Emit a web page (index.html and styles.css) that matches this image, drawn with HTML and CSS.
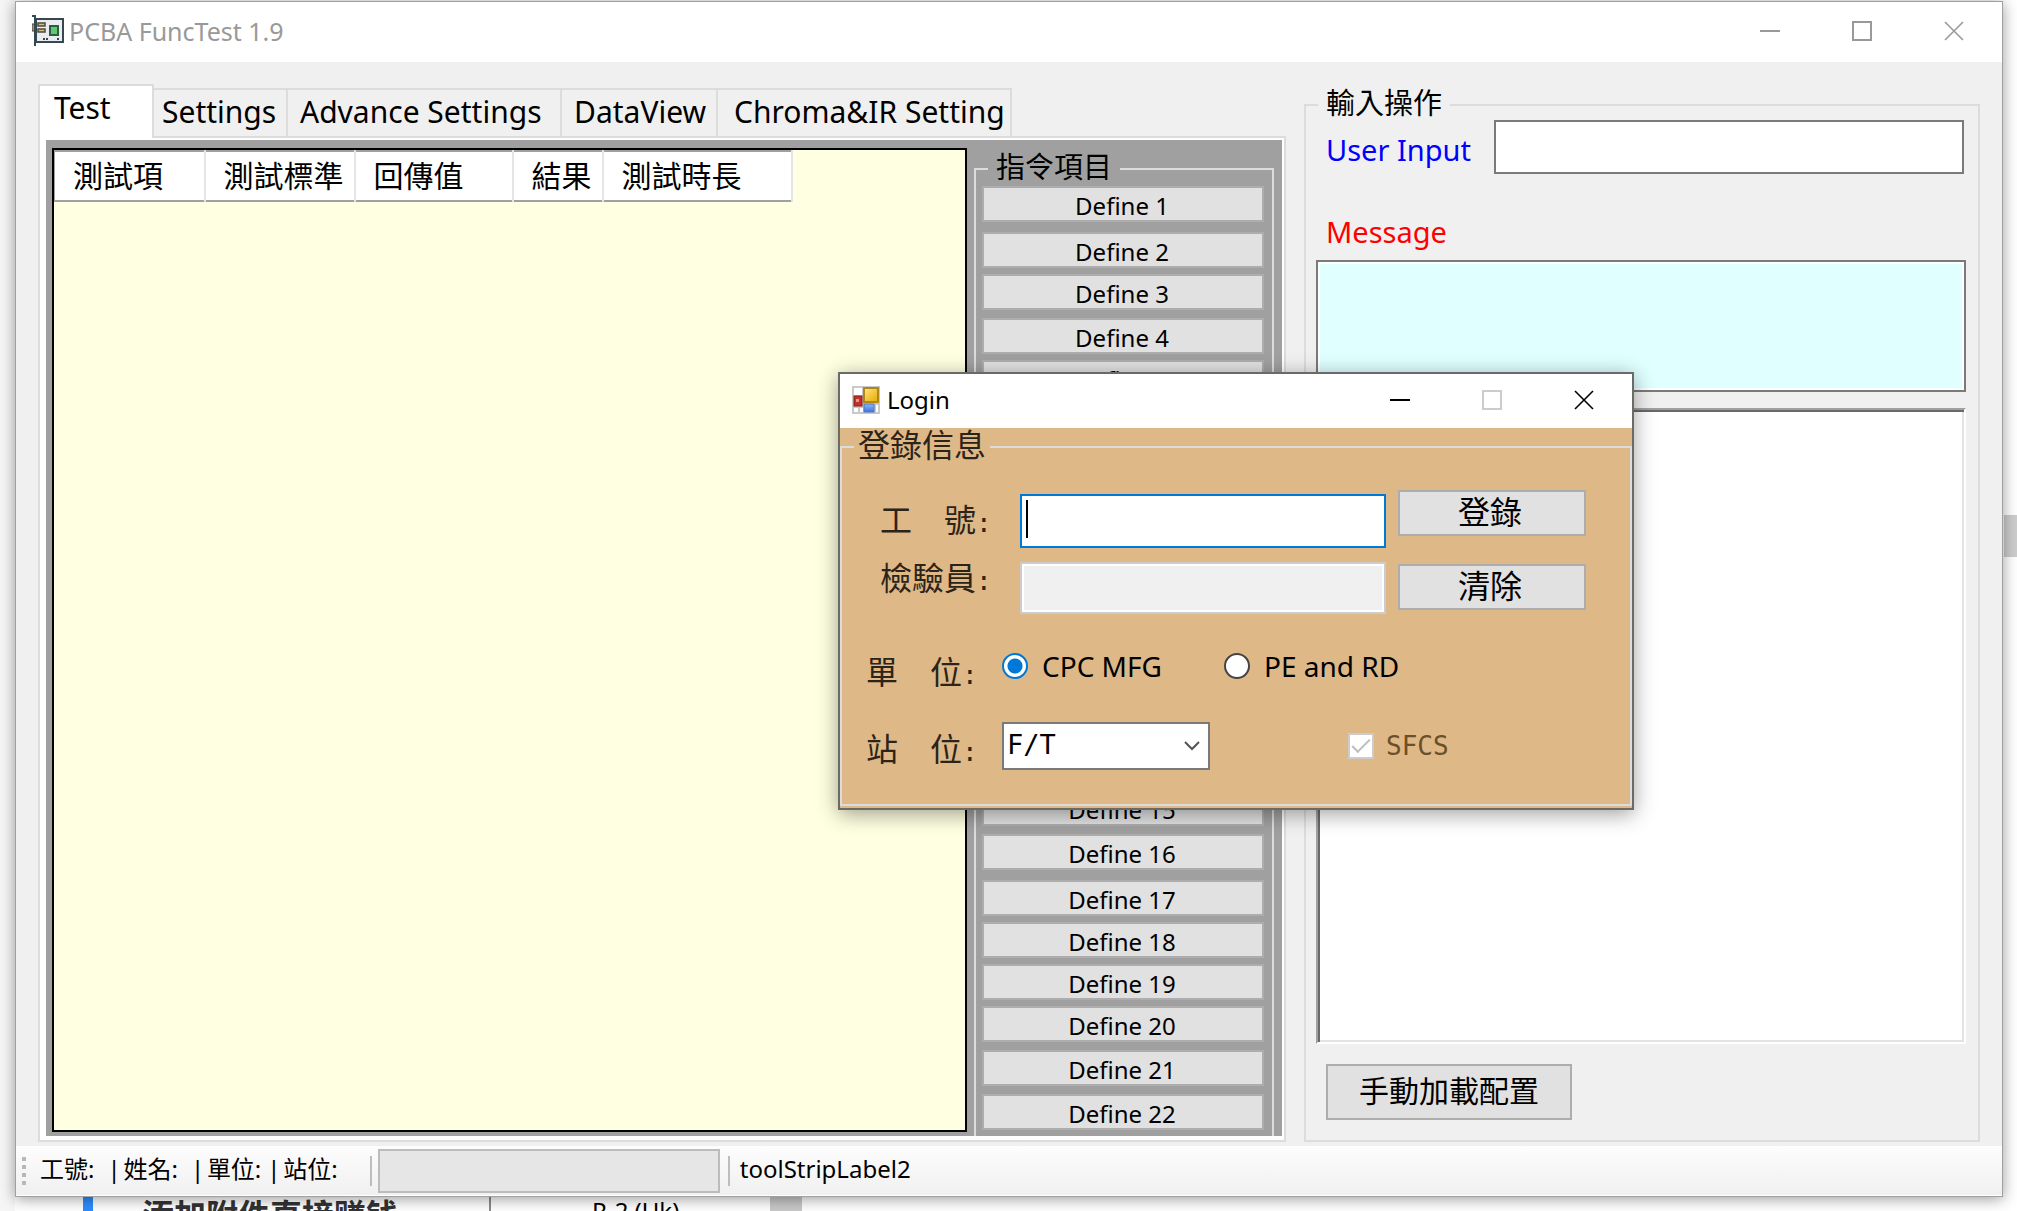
FILE: index.html
```html
<!DOCTYPE html>
<html lang="zh-Hant">
<head>
<meta charset="utf-8">
<title>PCBA FuncTest 1.9</title>
<link rel="stylesheet" href="styles.css">
</head>
<body>
<div class="window">
  <header class="titlebar">
    <svg class="app-icon" viewBox="0 0 32 32" aria-hidden="true">
      <rect x="0" y="9" width="3" height="7" fill="#c98a5c" stroke="#37474f"/>
      <rect x="4" y="4" width="27" height="23" fill="#e9edf0" stroke="#37474f" stroke-width="2"/>
      <path d="M0 1h3v30" fill="none" stroke="#2f4a50" stroke-width="2"/>
      <rect x="6" y="8" width="7" height="3" fill="#d3bd7c" stroke="#4d4a3c" stroke-width="1.5"/>
      <rect x="6" y="14" width="7" height="3" fill="#d3bd7c" stroke="#4d4a3c" stroke-width="1.5"/>
      <rect x="18" y="11" width="8" height="9" fill="#5ccb68" stroke="#2f5a48" stroke-width="2"/>
      <path d="M11 24h2M14 24h2M25 24h2" stroke="#37474f" stroke-width="2"/>
    </svg>
    <h1 class="caption">PCBA FuncTest 1.9</h1>
    <div class="controls">
      <button type="button" aria-label="Minimize"><svg viewBox="0 0 20 20"><path d="M0 10h20"/></svg></button>
      <button type="button" aria-label="Maximize"><svg viewBox="0 0 20 20"><path d="M1 1h18v18H1z"/></svg></button>
      <button type="button" aria-label="Close"><svg viewBox="0 0 20 20"><path class="thin" d="M1 1l18 18M19 1L1 19"/></svg></button>
    </div>
  </header>

  <main class="workspace">
    <section class="tabs">
      <div class="tab-list" role="tablist">
        <button type="button" role="tab" class="tab selected" aria-selected="true">Test</button>
        <button type="button" role="tab" class="tab settings">Settings</button>
        <button type="button" role="tab" class="tab advance">Advance Settings</button>
        <button type="button" role="tab" class="tab dataview">DataView</button>
        <button type="button" role="tab" class="tab chroma">Chroma&amp;IR Setting</button>
      </div>
      <div class="tab-panel">
        <div class="test-page">
          <div class="results">
            <table>
              <colgroup><col class="w-item"><col class="w-standard"><col class="w-value"><col class="w-result"><col class="w-time"></colgroup>
              <thead><tr><th>測試項</th><th>測試標準</th><th>回傳值</th><th>結果</th><th>測試時長</th></tr></thead>
            </table>
          </div>
          <fieldset class="commands">
            <legend>指令項目</legend>
            <button type="button" class="far">Define 1</button>
            <button type="button">Define 2</button>
            <button type="button" class="mid">Define 3</button>
            <button type="button">Define 4</button>
            <button type="button" class="mid">Define 5</button>
            <button type="button">Define 6</button>
            <button type="button" class="mid">Define 7</button>
            <button type="button">Define 8</button>
            <button type="button" class="mid">Define 9</button>
            <button type="button">Define 10</button>
            <button type="button" class="mid">Define 11</button>
            <button type="button">Define 12</button>
            <button type="button" class="mid">Define 13</button>
            <button type="button">Define 14</button>
            <button type="button" class="mid">Define 15</button>
            <button type="button" class="far">Define 16</button>
            <button type="button">Define 17</button>
            <button type="button">Define 18</button>
            <button type="button">Define 19</button>
            <button type="button" class="mid">Define 20</button>
            <button type="button" class="mid">Define 21</button>
            <button type="button">Define 22</button>
          </fieldset>
        </div>
      </div>
    </section>

    <fieldset class="operation">
      <legend>輸入操作</legend>
      <div class="input-row">
        <label for="user-input">User Input</label>
        <input id="user-input" type="text">
      </div>
      <label class="message-label" for="message">Message</label>
      <textarea id="message" class="message" readonly></textarea>
      <textarea class="log" aria-label="Log" readonly></textarea>
      <button type="button" class="load">手動加載配置</button>
    </fieldset>
  </main>

  <footer class="statusbar">
    <span class="grip"></span>
    <span class="cell">工號:</span><span class="bar">|</span>
    <span class="cell">姓名:</span><span class="bar">|</span>
    <span class="cell">單位:</span><span class="bar tight">|</span>
    <span class="cell">站位:</span>
    <span class="separator first"></span>
    <span class="progress"></span>
    <span class="separator"></span>
    <span class="cell">toolStripLabel2</span>
  </footer>
</div>

<div class="backdrop">
  <span class="marker"></span>
  <strong class="headline">添加附件直接赚钱</strong>
  <span class="drive">R-2 (Uk)</span>
  <span class="block"></span>
</div>
<div class="page-thumb"></div>

<form class="dialog">
  <header class="titlebar dialog-title">
    <svg class="form-icon" viewBox="0 0 28 28" aria-hidden="true">
      <defs>
        <linearGradient id="gold" x2="1" y2="1"><stop stop-color="#ffe680"/><stop offset="1" stop-color="#eaa800"/></linearGradient>
        <linearGradient id="blue" x2="0" y2="1"><stop stop-color="#8db8f5"/><stop offset="1" stop-color="#3f74d8"/></linearGradient>
      </defs>
      <rect width="28" height="28" fill="#c9c9c9"/>
      <path d="M2 2h8v7H2zM2 22h4v4H2zM8 22h3v4H8zM24 19h2v7h-2z" fill="#fff"/>
      <rect x="2" y="10" width="8" height="10" fill="#c03028" stroke="#8e1d18"/>
      <rect x="4" y="13" width="3" height="3" fill="#f09088"/>
      <rect x="12" y="2" width="14" height="14" fill="url(#gold)" stroke="#b08818" stroke-width="2"/>
      <rect x="12" y="18" width="10" height="8" fill="url(#blue)" stroke="#4a78c8"/>
    </svg>
    <h2 class="caption">Login</h2>
    <div class="controls">
      <button type="button" aria-label="Minimize"><svg viewBox="0 0 20 20"><path d="M0 10h20"/></svg></button>
      <button type="button" aria-label="Maximize" disabled><svg viewBox="0 0 20 20"><path d="M1 1h18v18H1z"/></svg></button>
      <button type="button" aria-label="Close"><svg viewBox="0 0 20 20"><path class="thin" d="M1 1l18 18M19 1L1 19"/></svg></button>
    </div>
  </header>
  <div class="dialog-body">
    <fieldset>
      <legend>登錄信息</legend>
      <div class="credentials">
        <div class="fields">
          <label for="job-no">工　號<span class="colon">:</span></label>
          <input id="job-no" class="active" type="text">
          <label for="inspector">檢驗員<span class="colon">:</span></label>
          <input id="inspector" type="text" disabled>
        </div>
        <div class="actions">
          <button type="submit">登錄</button>
          <button type="reset">清除</button>
        </div>
      </div>
      <div class="unit" role="radiogroup" aria-labelledby="unit-label">
        <span id="unit-label" class="kai">單　位<span class="colon">:</span></span>
        <input type="radio" name="unit" id="mfg" checked><label for="mfg">CPC MFG</label>
        <input type="radio" name="unit" id="rd"><label for="rd">PE and RD</label>
      </div>
      <div class="station">
        <label class="kai" for="station">站　位<span class="colon">:</span></label>
        <span class="select-box">
          <select id="station"><option>F/T</option></select>
          <svg viewBox="0 0 16 10" aria-hidden="true"><path d="M1 1l7 7 7-7"/></svg>
        </span>
        <input type="checkbox" id="sfcs" checked disabled><label class="sfcs" for="sfcs">SFCS</label>
      </div>
    </fieldset>
  </div>
</form>
</body>
</html>
```

FILE: styles.css
```css
*, *::before, *::after { box-sizing: border-box; }

body {
  margin: 0;
  height: 100vh;
  overflow: hidden;
  display: flex;
  flex-direction: column;
  position: relative;
  background: linear-gradient(90deg, #f6f6f6 15px, #fff 15px);
  color: #000;
  font-family: "Noto Sans", "Noto Sans CJK TC", sans-serif;
  font-size: 28px;
}

button, input, select, textarea { font: inherit; color: inherit; margin: 0; border-radius: 0; outline: 0; }
button { padding: 0; background: #e1e1e1; border: 2px solid #adadad; }
fieldset { margin: 0; padding: 0; min-width: 0; border: 2px solid #dcdcdc; }
textarea { display: block; width: 100%; resize: none; }

/* Window frame */
.window {
  flex: 1;
  min-height: 0;
  margin: 1px 14px 0 15px;
  border: 1px solid #a0a0a0;
  display: flex;
  flex-direction: column;
  position: relative;
  z-index: 1;
  background: #f0f0f0;
  box-shadow: 0 2px 14px rgba(0, 0, 0, .4);
}
.titlebar { display: flex; align-items: center; background: #fff; height: 60px; padding: 0 2px 3px 16px; }
.caption { margin: 0; font-size: 25px; font-weight: 400; line-height: 32px; }
.app-icon { width: 32px; height: 32px; margin-right: 5px; }
.window > .titlebar { color: #999; }
.controls { display: flex; margin-left: auto; }
.controls button { width: 92px; height: 54px; border: 0; background: none; display: grid; place-items: center; }
.controls svg { width: 20px; height: 20px; fill: none; stroke: currentColor; stroke-width: 2; }
.controls .thin { stroke-width: 1.6; }
.controls button:disabled { color: #ccc; }

.workspace {
  flex: 1;
  min-height: 0;
  display: grid;
  grid-template-columns: 1248fr 676fr;
  gap: 18px;
  padding: 22px 22px 4px;
}

/* Tabs */
.tabs { display: flex; flex-direction: column; min-height: 0; }
.tab-list { display: flex; align-items: flex-end; height: 52px; }
.tab {
  height: 48px;
  padding: 0 0 2px 8px;
  text-align: left;
  font-size: 30px;
  line-height: 40px;
  white-space: nowrap;
  background: #f0f0f0;
  border: solid #dcdcdc;
  border-width: 2px 2px 0 0;
}
.tab.selected { width: 116px; height: 54px; margin-bottom: -2px; padding: 0 0 8px 14px; background: #fff; border-width: 2px 2px 0; position: relative; }
.tab.settings { width: 134px; }
.tab.advance { width: 274px; padding-left: 12px; }
.tab.dataview { width: 156px; padding-left: 12px; }
.tab.chroma { width: 294px; padding-left: 16px; }
.tab-panel { flex: 1; min-height: 0; display: flex; background: #fff; border: 2px solid #dcdcdc; padding: 2px 2px 4px 6px; }
.test-page { flex: 1; display: grid; grid-template-columns: 1fr 300px; gap: 7px; padding: 8px 8px 0 6px; background: #a0a0a0; }

.results { border: 2px solid #000; background: #ffffe1; margin-bottom: 4px; }
.results table { border-collapse: collapse; table-layout: fixed; width: 737px; background: #fff; border: solid #a0a0a0; border-width: 2px 0 2px 1px; }
.results th { height: 50px; padding: 0 0 0 18px; text-align: left; font-size: 30px; line-height: 36px; font-weight: 400; border-right: 2px solid #e5e5e5; }
.w-item { width: 150px; }
.w-standard { width: 150px; }
.w-value { width: 158px; }
.w-result { width: 90px; }
.w-time { width: 189px; }

legend { padding: 0 8px 4px; font-size: 29px; line-height: 26px; }
.commands { margin-top: 6px; padding: 2px 8px 6px 6px; border-bottom: 0; }
.commands legend { margin-left: 6px; }
.commands button { display: block; width: 100%; height: 36px; margin-bottom: 6px; padding: 4px 2px 0 0; font-size: 24px; line-height: 28px; }
.commands button.mid { margin-bottom: 8px; }
.commands button.far { margin-bottom: 10px; }
.commands button:last-child { margin-bottom: 0; }

/* Operation panel */
.operation { margin-top: 6px; min-height: 0; padding: 0 12px 20px 10px; display: flex; flex-direction: column; }
.operation legend { margin-left: 2px; }
.input-row { display: flex; align-items: center; padding-left: 10px; }
.input-row label { width: 168px; padding-top: 6px; color: #00f; font-size: 29px; line-height: 36px; }
.input-row input { flex: 1; min-width: 0; height: 54px; margin-right: 2px; background: #fff; border: 2px solid #7a7a7a; }
.message-label { margin: 40px 0 10px 10px; font-size: 29px; line-height: 36px; color: #f00; }
.message { height: 132px; background: #e0ffff; border: 2px solid #7a7a7a; box-shadow: inset 0 0 0 2px #fff; }
.log { flex: 1; min-height: 0; margin: 16px 0 20px; background: #fff; border: 2px solid; border-color: #a0a0a0 #fff #fff #a0a0a0; box-shadow: inset 2px 2px #696969, inset -2px -2px #e3e3e3; }
.load { align-self: flex-start; width: 246px; height: 56px; margin-left: 10px; padding-bottom: 2px; font-size: 30px; line-height: 40px; }

/* Status bar */
.statusbar { display: flex; align-items: center; height: 50px; padding: 0 6px; font-size: 24px; line-height: 32px; background: linear-gradient(#fdfdfd, #f0f0f0); border-bottom: 1px solid #fff; white-space: nowrap; }
.cell, .bar { padding-bottom: 4px; }
.grip { width: 4px; height: 28px; margin-right: 14px; background: repeating-linear-gradient(#b8b8b8 0 4px, transparent 4px 8px); }
.bar { width: 12px; margin: 0 4px 0 13px; text-align: center; }
.bar.tight { margin: 0 4px 0 6px; }
.separator { width: 2px; height: 30px; background: #bdbdbd; margin: 0 10px 0 8px; }
.separator.first { margin: 0 6px 0 32px; }
.progress { width: 342px; height: 44px; background: #e6e6e6; border: 2px solid #bcbcbc; }

/* What shows behind the window */
.backdrop { flex: none; display: flex; align-items: flex-start; height: 14px; padding-left: 83px; overflow: hidden; }
.marker { width: 10px; height: 14px; background: #2d8cff; }
.headline { width: 398px; height: 34px; padding-left: 49px; border-right: 2px solid #8c8c8c; font-family: "Noto Sans CJK SC", sans-serif; font-size: 32px; line-height: 32px; color: #333; white-space: nowrap; }
.drive { width: 279px; padding-left: 101px; font-size: 24px; line-height: 28px; }
.block { width: 32px; height: 14px; background: #c9c9c9; }
.page-thumb { position: absolute; right: 0; top: 515px; width: 13px; height: 42px; background: #cdcdcd; }

/* Login dialog */
.dialog {
  position: absolute;
  left: 838px;
  top: 372px;
  z-index: 2;
  width: 796px;
  border: 2px solid #6b6b66;
  background: #deb887;
  box-shadow: 0 4px 20px rgba(0, 0, 0, .38);
}
.dialog-title { height: 54px; padding-left: 12px; }
.dialog-title .caption { font-size: 24px; }
.dialog-title .controls button { height: 50px; }
.form-icon { width: 28px; height: 28px; margin-right: 7px; }
.dialog-body { padding: 3px 0 2px; }
.dialog fieldset { padding: 27px 44px 34px 24px; }
.dialog legend { margin-left: -12px; padding: 0 4px 4px; font-size: 32px; line-height: 28px; color: #2c2418; }
.credentials { display: flex; gap: 12px; padding-left: 14px; }
.fields { flex: 1; display: grid; grid-template-columns: 140px 1fr; row-gap: 14px; padding-top: 4px; }
.fields label, .kai { font-size: 32px; line-height: 36px; color: #2c2418; white-space: pre; }
.fields label { padding-top: 8px; }
.fields label:nth-of-type(2) { padding-top: 0; line-height: 32px; }
.colon { font-family: "DejaVu Sans Mono", monospace; font-size: 26px; }
.fields input { width: 100%; min-width: 0; height: 54px; border: 2px solid #0078d7; background: #fff; }
.fields .active { caret-color: transparent; background: linear-gradient(#000, #000) 4px 4px / 2px 38px no-repeat #fff; }
.fields input:disabled { height: 52px; border-color: #ccc; background: #f0f0f0; box-shadow: inset 0 0 0 2px #fff; }
.actions { display: flex; flex-direction: column; gap: 28px; width: 188px; }
.actions button { height: 46px; padding: 0 4px 2px 0; font-size: 32px; line-height: 36px; }
.unit { display: flex; align-items: center; margin-top: 24px; }
.unit label { line-height: 40px; margin-right: 62px; }
.kai { width: 136px; padding-top: 8px; }
.unit .kai { padding-top: 16px; }
.unit input { appearance: none; flex: none; width: 26px; height: 26px; margin-right: 14px; border: 2px solid #444; border-radius: 50%; background: #fff; }
.unit input:checked { border-color: #0078d7; background: radial-gradient(circle, #0078d7 7px, #fff 8px); }
.station { display: flex; align-items: center; margin-top: 29px; }
.select-box { display: grid; width: 208px; align-items: center; }
.select-box > * { grid-area: 1 / 1; }
.select-box select { appearance: none; width: 100%; height: 48px; padding: 0 0 4px 3px; background: #fff; border: 2px solid #7a7a7a; font-family: "DejaVu Sans Mono", monospace; font-size: 27px; color: #000; }
.select-box svg { justify-self: end; width: 16px; height: 10px; margin-right: 10px; fill: none; stroke: #555; stroke-width: 2; pointer-events: none; }
.station input { appearance: none; flex: none; width: 26px; height: 26px; margin: 0 12px 0 138px; border: 2px solid #ccc; background: #fff; display: grid; place-items: center; }
.station input::after { content: ""; width: 18px; height: 9px; margin-bottom: 6px; border: solid #bdbdbd; border-width: 0 0 2px 2px; transform: rotate(-45deg); }
.sfcs { font-family: "DejaVu Sans Mono", monospace; font-size: 26px; line-height: 36px; color: #6b4f2a; }
```
